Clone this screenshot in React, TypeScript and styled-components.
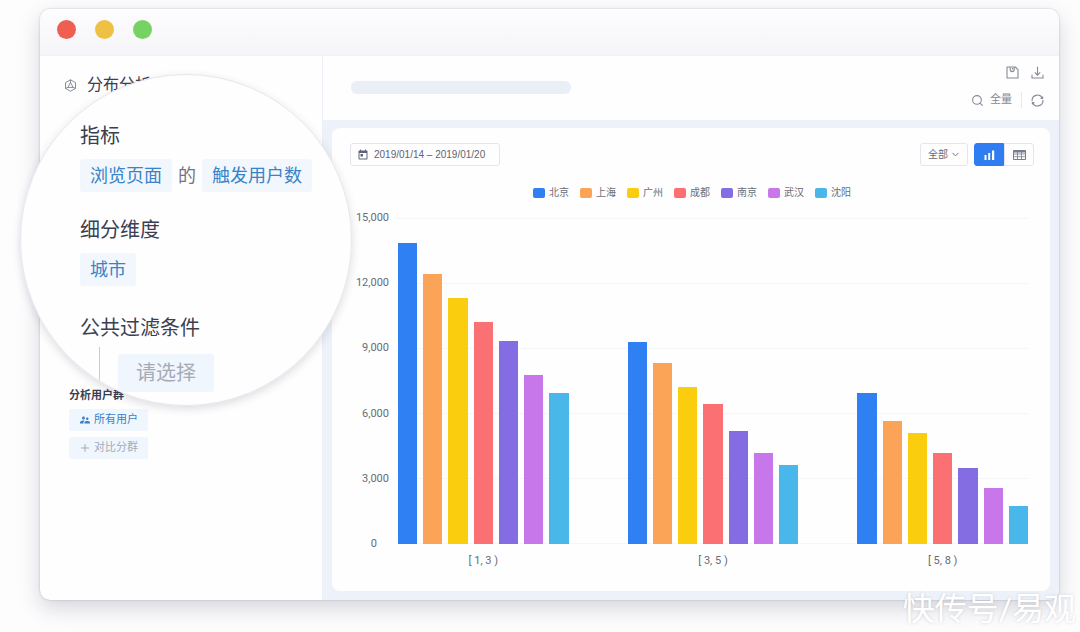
import React from "react";
import styled, { createGlobalStyle } from "styled-components";
import { MdSupervisorAccount, MdToday } from "react-icons/md";
import { Search, ChevronDown, Plus } from "lucide-react";

const GlobalStyle = createGlobalStyle`
  *, *::before, *::after { box-sizing: border-box; }
  body {
    margin: 0;
    background: #fdfdfe;
    color: #3a3f52;
    font-family: Roboto, "Noto Sans CJK SC", sans-serif;
    overflow-x: hidden;
  }
  button, input, select { font: inherit; color: inherit; margin: 0; }
  h1, h2, p { margin: 0; font-weight: 400; }
`;

const Page = styled.div`
  position: relative;
  padding: 9px 21px 33px 40px;
  overflow: hidden;
`;

const AppWindow = styled.main`
  border-radius: 10px;
  background: #fefefe;
  box-shadow: 0 0 2px rgba(50, 50, 80, 0.3), 0 8px 22px rgba(50, 54, 80, 0.2);
`;

const TitleBar = styled.header`
  display: flex;
  align-items: center;
  gap: 19px;
  height: 47px;
  padding: 0 17px 6px;
  border-bottom: 1px solid #f0f1f5;
  border-radius: 10px 10px 0 0;
  background: linear-gradient(#fdfdfe, #f5f5f9);
`;

const WindowDot = styled.span<{ $color: string }>`
  width: 19px;
  height: 19px;
  border-radius: 50%;
  background: ${(p) => p.$color};
`;

const Body = styled.div`
  display: flex;
`;

const Sidebar = styled.aside`
  flex: 0 0 283px;
  display: flex;
  flex-direction: column;
  align-items: flex-start;
  padding: 16px 29px;
  border-right: 1px solid #eceff6;
`;

const SidebarTitle = styled.h1`
  display: flex;
  align-items: center;
  gap: 10px;
  margin: 0 0 289px -5px;
  font-size: 16px;
  line-height: 26px;
`;

const GroupTitle = styled.h2`
  margin-bottom: 4px;
  font-size: 11px;
  font-weight: 700;
  line-height: 18px;
`;

const GroupButton = styled.button<{ $muted?: boolean }>`
  display: flex;
  align-items: center;
  gap: 3px;
  height: 22px;
  margin-bottom: 6px;
  padding: 0 10px;
  border: 0;
  border-radius: 2px;
  background: #f0f6fd;
  color: ${(p) => (p.$muted ? "#a3abb8" : "#3b7fc9")};
  font-size: 11px;
  line-height: 22px;
`;

const Main = styled.section`
  flex: 1;
  min-width: 0;
  display: flex;
  flex-direction: column;
`;

const Toolbar = styled.div`
  display: flex;
  justify-content: space-between;
  height: 64px;
  padding: 6px 15px 10px 28px;
`;

const SearchPlaceholder = styled.div`
  width: 220px;
  height: 13px;
  margin-top: 19px;
  border-radius: 6px;
  background: #e9eef7;
`;

const Tools = styled.div`
  display: flex;
  flex-direction: column;
  align-items: flex-end;
  gap: 8px;
`;

const ToolRow = styled.div<{ $gap: number }>`
  display: flex;
  align-items: center;
  gap: ${(p) => p.$gap}px;
  height: 20px;
`;

const ToolButton = styled.button`
  display: flex;
  align-items: center;
  gap: 6px;
  padding: 0;
  border: 0;
  background: none;
  color: #858a96;
  font-size: 11px;
  line-height: 20px;
`;

const Divider = styled.span`
  width: 1px;
  height: 16px;
  background: #e6e8ee;
`;

const Canvas = styled.div`
  flex: 1;
  padding: 8px 9px 9px;
  border-radius: 0 0 10px 0;
  background: #edf1f9;
`;

const Card = styled.div`
  padding: 15px 16px 21px 18px;
  border-radius: 8px;
  background: #fefefe;
`;

const CardHeader = styled.div`
  display: flex;
  justify-content: space-between;
  align-items: center;
`;

const DateField = styled.label`
  display: flex;
  align-items: center;
  gap: 5px;
  width: 150px;
  height: 23px;
  padding: 0 6px;
  border: 1px solid #e3e6ec;
  border-radius: 3px;
  color: #5d6475;

  svg { flex: none; }
`;

const DateInput = styled.input`
  width: 100%;
  min-width: 0;
  padding: 1px 0 0;
  border: 0;
  outline: 0;
  background: none;
  color: #5f6471;
  font-family: "Liberation Sans", sans-serif;
  font-size: 10px;
  line-height: 20px;
`;

const Controls = styled.div`
  display: flex;
  gap: 6px;
`;

const SelectBox = styled.label`
  display: grid;
  align-items: center;
  width: 48px;
  height: 23px;
  border: 1px solid #e3e6ec;
  border-radius: 3px;
  color: #666b78;

  > * { grid-area: 1 / 1; }
  svg { justify-self: end; margin-right: 6px; pointer-events: none; }
`;

const Select = styled.select`
  width: 100%;
  padding: 1px 0 0 7px;
  border: 0;
  outline: 0;
  appearance: none;
  background: none;
  font-size: 10px;
  line-height: 20px;
`;

const Toggle = styled.div`
  display: flex;
`;

const ToggleButton = styled.button<{ $active?: boolean }>`
  display: flex;
  align-items: center;
  justify-content: center;
  width: 30px;
  height: 23px;
  padding: 0;
  border: 1px solid ${(p) => (p.$active ? "#2f7df0" : "#e3e6ec")};
  border-radius: ${(p) => (p.$active ? "3px 0 0 3px" : "0 3px 3px 0")};
  background: ${(p) => (p.$active ? "#2f7df0" : "#fefefe")};
  color: ${(p) => (p.$active ? "#fff" : "#777d8a")};
`;

const Legend = styled.ul`
  display: flex;
  justify-content: center;
  gap: 11px;
  margin: 18px 0 8px;
  padding: 0;
  list-style: none;
`;

const LegendItem = styled.li`
  display: flex;
  align-items: center;
  gap: 4px;
  color: #6a6e78;
  font-size: 10px;
  line-height: 18px;
`;

const Swatch = styled.span<{ $color: string }>`
  width: 12px;
  height: 10px;
  border-radius: 2px;
  background: ${(p) => p.$color};
`;

const Chart = styled.figure`
  display: grid;
  grid-template-columns: 46px 1fr;
  margin: 0;
  padding-right: 6px;
  color: #676b76;
  font-size: 11px;
`;

const Axis = styled.div`
  display: flex;
  flex-direction: column;
  justify-content: space-between;
  height: 342px;
  padding-right: 7px;
  line-height: 16px;
  text-align: right;

  span:last-child { padding-right: 12px; }
`;

const Plot = styled.div`
  display: grid;
  height: 326px;
  margin-top: 8px;

  > * { grid-area: 1 / 1; }
`;

const GridLines = styled.div`
  display: flex;
  flex-direction: column;
  justify-content: space-between;

  span { height: 1px; background: #f5f6f8; }
`;

const Groups = styled.div`
  display: grid;
  grid-template-columns: repeat(3, 1fr);
  column-gap: 59px;
  padding-left: 2px;
`;

const BarGroup = styled.div`
  z-index: 1;
  display: grid;
  grid-template-columns: repeat(7, 1fr);
  align-items: end;
  column-gap: 6px;
`;

const Bar = styled.div<{ $color: string }>`
  background: ${(p) => p.$color};
`;

const GroupLabels = styled(Groups)`
  grid-column: 2;
  text-align: center;
  line-height: 18px;
`;

const Lens = styled.section`
  position: absolute;
  top: 74px;
  left: 20px;
  z-index: 2;
  width: 332px;
  height: 332px;
  padding: 46px 0 0 59px;
  overflow: hidden;
  border: 1px solid #e6e6ec;
  border-radius: 50%;
  background: #fefefe;
`;

const LensShadow = styled.div`
  position: absolute;
  top: 74px;
  left: 20px;
  z-index: 1;
  width: 332px;
  height: 332px;
  border-radius: 50%;
  box-shadow: 0 3px 8px rgba(50, 50, 80, 0.16);
`;

const LensTitle = styled.h2`
  font-size: 20px;
  line-height: 30px;
`;

const LensRow = styled.div<{ $space: number }>`
  display: flex;
  align-items: center;
  gap: 6px;
  margin: 8px 0 ${(p) => p.$space}px;
  color: #6f7484;
  font-size: 18px;
  line-height: 32px;
`;

const Tag = styled.button`
  flex: none;
  height: 33px;
  padding: 0 10px;
  border: 0;
  border-radius: 3px;
  background: #f1f7fd;
  color: #3983c9;
  font-size: 18px;
  line-height: 33px;
`;

const FilterRow = styled.div`
  display: flex;
  align-items: flex-start;
  gap: 18px;
  margin-top: 4px;
  padding-left: 19px;
`;

const Branch = styled.span`
  width: 1px;
  height: 36px;
  background: #c9cbd2;
`;

const FilterButton = styled.button`
  height: 38px;
  margin-top: 7px;
  padding: 0 18px;
  border: 0;
  border-radius: 3px;
  background: #f0f6fe;
  color: #a5abb6;
  font-size: 20px;
  line-height: 38px;
`;

const Watermark = styled.p`
  position: absolute;
  right: 4px;
  bottom: 0;
  z-index: 3;
  color: #fff;
  font-size: 32px;
  line-height: 48px;
  text-shadow: 0 0 3px rgba(80, 80, 100, 0.22);
  white-space: nowrap;
`;

const cities = [
  { name: "北京", color: "#2f80f3" },
  { name: "上海", color: "#fba457" },
  { name: "广州", color: "#fbcd0f" },
  { name: "成都", color: "#fa7073" },
  { name: "南京", color: "#846de2" },
  { name: "武汉", color: "#c877ea" },
  { name: "沈阳", color: "#4ab7ea" },
];

const ranges = [
  { label: "[ 1, 3 )", values: [13830, 12430, 11300, 10220, 9350, 7790, 6930] },
  { label: "[ 3, 5 )", values: [9300, 8310, 7230, 6450, 5180, 4170, 3640] },
  { label: "[ 5, 8 )", values: [6930, 5640, 5110, 4170, 3480, 2580, 1750] },
];

const ticks = ["15,000", "12,000", "9,000", "6,000", "3,000", "0"];
const MAX = 15000;

const DistributionIcon = () => (
  <svg width="13" height="13" viewBox="0 0 13 13" fill="none" stroke="#6b707d" strokeWidth="0.8">
    <path d="M6.5 0.8 11.5 3.6V9.4L6.5 12.2 1.5 9.4V3.6Z" strokeLinejoin="round" />
    <path d="M6.5 3.4 9.1 8.4H3.9ZM1.5 9.4 3.9 8.4M11.5 9.4 9.1 8.4M6.5 0.8V3.4" />
  </svg>
);

const SaveIcon = () => (
  <svg width="13" height="13" viewBox="0 0 13 13" fill="none" stroke="currentColor" strokeWidth="1.1" strokeLinejoin="round">
    <path d="M1 1H9.3L12 3.6V12H1Z" />
    <path d="M4.2 1V3.6A2 2 0 0 0 8.2 3.6V1M6.6 2V3.6" />
  </svg>
);

const DownloadIcon = () => (
  <svg width="13" height="13" viewBox="0 0 13 13" fill="none" stroke="currentColor" strokeWidth="1.1">
    <path d="M6.5 0.8V9M3.8 6.4 6.5 9.1 9.2 6.4M1 8.8V12H12V8.8" />
  </svg>
);

const RefreshIcon = () => (
  <svg width="13" height="13" viewBox="0 0 13 13" fill="none" stroke="currentColor" strokeWidth="1.1">
    <path d="M1.2 7.2A5.3 5.3 0 0 1 11.2 4.1M11.8 5.8A5.3 5.3 0 0 1 1.8 8.9" />
    <path d="M11.6 2.4V4.4H9.6M1.4 10.6V8.6H3.4" />
  </svg>
);

const BarsIcon = () => (
  <svg width="11" height="10" viewBox="0 0 11 10" fill="currentColor">
    <path d="M0.5 5H2.5V10H0.5ZM4.2 3H6.2V10H4.2ZM8 0.5H10.2V10H8Z" />
  </svg>
);

const TableIcon = () => (
  <svg width="13" height="10" viewBox="0 0 13 10" fill="none" stroke="currentColor">
    <path d="M0.5 0.5H12.5V9.5H0.5Z" />
    <path d="M0.5 1.5H12.5" strokeWidth="2" />
    <path d="M0.5 4H12.5M0.5 6.7H12.5M4.5 1V9.5M8.5 1V9.5" strokeWidth="0.8" />
  </svg>
);

export default function App() {
  return (
    <>
      <GlobalStyle />
      <Page>
        <AppWindow>
          <TitleBar>
            <WindowDot $color="#ee5f52" />
            <WindowDot $color="#eec044" />
            <WindowDot $color="#76d263" />
          </TitleBar>
          <Body>
            <Sidebar>
              <SidebarTitle>
                <DistributionIcon />
                分布分析
              </SidebarTitle>
              <GroupTitle>分析用户群</GroupTitle>
              <GroupButton>
                <MdSupervisorAccount size={12} />
                所有用户
              </GroupButton>
              <GroupButton $muted>
                <Plus size={12} strokeWidth={2} />
                对比分群
              </GroupButton>
            </Sidebar>
            <Main>
              <Toolbar>
                <SearchPlaceholder />
                <Tools>
                  <ToolRow $gap={12}>
                    <ToolButton aria-label="保存"><SaveIcon /></ToolButton>
                    <ToolButton aria-label="下载"><DownloadIcon /></ToolButton>
                  </ToolRow>
                  <ToolRow $gap={9}>
                    <ToolButton>
                      <Search size={13} strokeWidth={2} />
                      全量
                    </ToolButton>
                    <Divider />
                    <ToolButton aria-label="刷新"><RefreshIcon /></ToolButton>
                  </ToolRow>
                </Tools>
              </Toolbar>
              <Canvas>
                <Card>
                  <CardHeader>
                    <DateField>
                      <MdToday size={12} />
                      <DateInput aria-label="日期范围" defaultValue="2019/01/14 – 2019/01/20" />
                    </DateField>
                    <Controls>
                      <SelectBox>
                        <Select aria-label="范围" defaultValue="全部">
                          <option>全部</option>
                        </Select>
                        <ChevronDown size={11} />
                      </SelectBox>
                      <Toggle>
                        <ToggleButton $active aria-label="柱状图"><BarsIcon /></ToggleButton>
                        <ToggleButton aria-label="表格"><TableIcon /></ToggleButton>
                      </Toggle>
                    </Controls>
                  </CardHeader>
                  <Legend>
                    {cities.map((city) => (
                      <LegendItem key={city.name}>
                        <Swatch $color={city.color} />
                        {city.name}
                      </LegendItem>
                    ))}
                  </Legend>
                  <Chart>
                    <Axis>
                      {ticks.map((tick) => <span key={tick}>{tick}</span>)}
                    </Axis>
                    <Plot>
                      <GridLines>
                        {ticks.map((tick) => <span key={tick} />)}
                      </GridLines>
                      <Groups>
                        {ranges.map((range) => (
                          <BarGroup key={range.label}>
                            {range.values.map((value, i) => (
                              <Bar
                                key={cities[i].name}
                                $color={cities[i].color}
                                style={{ height: `${(value / MAX) * 100}%` }}
                              />
                            ))}
                          </BarGroup>
                        ))}
                      </Groups>
                    </Plot>
                    <GroupLabels>
                      {ranges.map((range) => <span key={range.label}>{range.label}</span>)}
                    </GroupLabels>
                  </Chart>
                </Card>
              </Canvas>
            </Main>
          </Body>
        </AppWindow>
        <LensShadow />
        <Lens>
          <LensTitle>指标</LensTitle>
          <LensRow $space={23}>
            <Tag>浏览页面</Tag>
            的
            <Tag>触发用户数</Tag>
          </LensRow>
          <LensTitle>细分维度</LensTitle>
          <LensRow $space={27}>
            <Tag>城市</Tag>
          </LensRow>
          <LensTitle>公共过滤条件</LensTitle>
          <FilterRow>
            <Branch />
            <FilterButton>请选择</FilterButton>
          </FilterRow>
        </Lens>
        <Watermark>快传号/易观</Watermark>
      </Page>
    </>
  );
}
